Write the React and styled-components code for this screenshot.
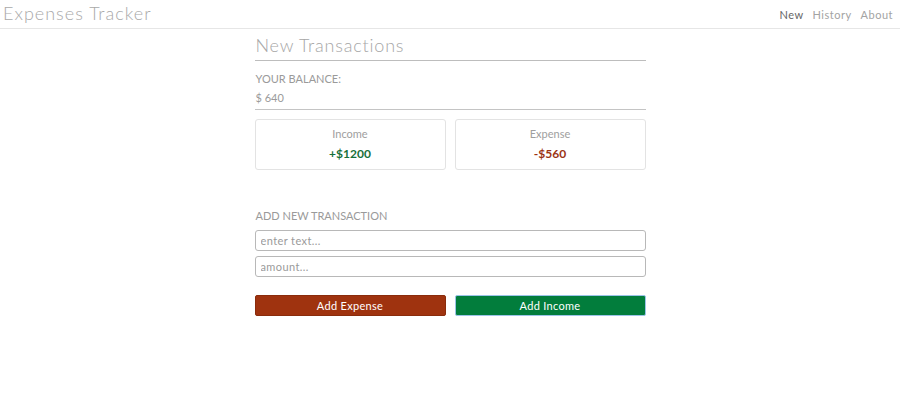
import React from 'react'
import styled, { createGlobalStyle } from 'styled-components'

const FONT = '"Lato", "Open Sans", sans-serif'

const GlobalStyle = createGlobalStyle`
  html, body { margin: 0; padding: 0; background: #fff; }
  body { font-family: ${FONT}; }
  * { box-sizing: border-box; }
`

const Header = styled.header`
  height: 29px;
  display: flex;
  align-items: center;
  justify-content: space-between;
  padding: 0 7px 0 3px;
  border-bottom: 1px solid #e6e6e6;
`

const Brand = styled.div`
  font-size: 18px;
  font-weight: 300;
  letter-spacing: 1px;
  color: #a9a9a9;
  margin-top: -2px;
`

const Nav = styled.nav`
  display: flex;
  gap: 9px;
`

const NavLink = styled.a`
  font-size: 11px;
  letter-spacing: 0.5px;
  color: ${p => (p.$active ? '#666' : '#a3a3a3')};
  text-decoration: none;
  cursor: pointer;
`

const Main = styled.main`
  width: 391px;
  margin: 0 auto;
  display: flex;
  flex-direction: column;
`

const Title = styled.h1`
  margin: 0;
  padding: 5px 0 4px 1px;
  font-size: 18px;
  font-weight: 300;
  letter-spacing: 0.8px;
  color: #a6a6a6;
  border-bottom: 1px solid #bdbdbd;
`

const Label = styled.div`
  font-size: 11px;
  color: #9a9a9a;
  text-transform: uppercase;
  padding-left: 1px;
  margin-top: ${p => p.$top || 0}px;
`

const Balance = styled.div`
  font-size: 11px;
  color: #9a9a9a;
  padding: 6px 0 5px 1px;
  border-bottom: 1px solid #c4c4c4;
`

const Cards = styled.div`
  display: grid;
  grid-template-columns: 1fr 1fr;
  gap: 9px;
  margin-top: 9px;
`

const Card = styled.div`
  height: 51px;
  border: 1px solid #e3e3e3;
  border-radius: 3px;
  display: flex;
  flex-direction: column;
  align-items: center;
  padding-top: 7px;
  gap: 6px;
`

const CardLabel = styled.div`
  font-size: 11px;
  color: #9e9e9e;
`

const Amount = styled.div`
  font-size: 12px;
  font-weight: 700;
  color: ${p => p.$color};
`

const Input = styled.input`
  height: 21px;
  width: 100%;
  border: 1px solid #b8b8b8;
  border-radius: 3px;
  padding: 0 5px;
  font-family: ${FONT};
  font-size: 11px;
  color: #555;
  margin-top: ${p => p.$top || 0}px;
  &::placeholder { color: #9a9a9a; letter-spacing: 0.4px; }
  outline: none;
`

const Buttons = styled.div`
  display: grid;
  grid-template-columns: 1fr 1fr;
  gap: 9px;
  margin-top: 18px;
`

const Button = styled.button`
  height: 21px;
  border: 1px solid ${p => p.$border};
  border-radius: 2px;
  background: ${p => p.$bg};
  color: #fff;
  font-family: ${FONT};
  font-size: 11px;
  letter-spacing: 0.3px;
  cursor: pointer;
  padding: 0;
`

export default function App() {
  return (
    <>
      <GlobalStyle />
      <Header>
        <Brand>Expenses Tracker</Brand>
        <Nav>
          <NavLink $active>New</NavLink>
          <NavLink>History</NavLink>
          <NavLink>About</NavLink>
        </Nav>
      </Header>
      <Main>
        <Title>New Transactions</Title>
        <Label $top={11}>Your Balance:</Label>
        <Balance>$ 640</Balance>
        <Cards>
          <Card>
            <CardLabel>Income</CardLabel>
            <Amount $color="#17703a">+$1200</Amount>
          </Card>
          <Card>
            <CardLabel>Expense</CardLabel>
            <Amount $color="#9b3414">-$560</Amount>
          </Card>
        </Cards>
        <Label $top={39}>Add new transaction</Label>
        <Input $top={8} placeholder="enter text..." />
        <Input $top={5} placeholder="amount..." />
        <Buttons>
          <Button $bg="#9f330f" $border="#8a2c0c">Add Expense</Button>
          <Button $bg="#027d3c" $border="#9cc4e8">Add Income</Button>
        </Buttons>
      </Main>
    </>
  )
}
